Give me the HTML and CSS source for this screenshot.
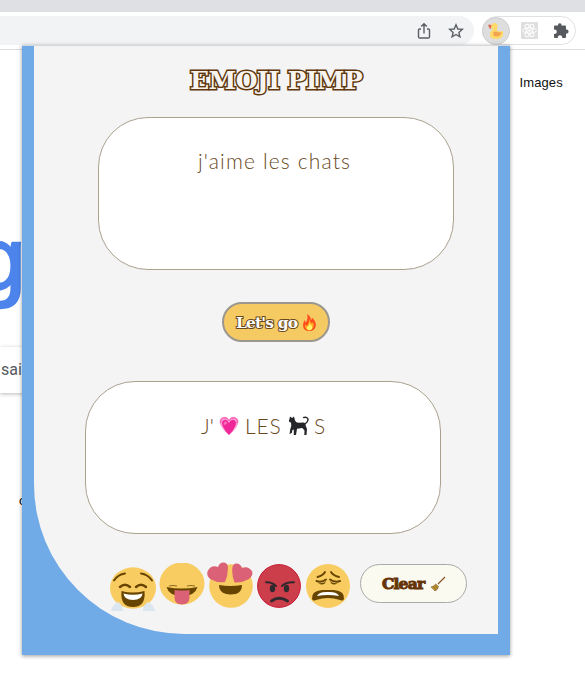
FILE: index.html
```
<!DOCTYPE html>
<html lang="fr">
<head>
<meta charset="utf-8">
<title>Emoji Pimp</title>
<link rel="stylesheet" href="styles.css">
</head>
<body>
<header class="browser">
  <div class="tabs"></div>
  <div class="toolbar">
    <div class="address">
      <svg class="share" width="14" height="18" viewBox="0 0 14 18" fill="none" stroke="#5c5f63" stroke-width="1.4"><path d="M4 7H2.6Q1.5 7 1.5 8V14.8Q1.5 16 2.7 16H11.3Q12.5 16 12.5 14.8V8Q12.5 7 11.4 7H10M7 11.5V2M4.2 4.6L7 1.8L9.8 4.6"/></svg>
      <svg class="star" width="16" height="16" viewBox="0 0 16 16" fill="none" stroke="#5c5f63" stroke-width="1.4"><path d="M8 1.8L9.8 6L14.3 6.4L10.9 9.4L11.9 13.8L8 11.5L4.1 13.8L5.1 9.4L1.7 6.4L6.2 6Z"/></svg>
    </div>
    <div class="extensions">
      <span class="duck"><svg width="18" height="18" viewBox="0 0 18 18"><path fill="#ffd96a" d="M4 4Q5 .5 8 1Q11 1.5 10.5 5Q9.5 7 10 8.5Q12 10 16 9Q17.5 16.5 10 17Q2 17.5 3 11Q3.3 9 6 7.5Q3.8 7 4 4"/><path fill="#f2a451" d="M6.5 10Q9 8.6 12 10.5Q14.5 10 14.5 11Q12.5 15 9 14.5Q5.5 14 6.5 10"/><path fill="#d9694c" d="M1.5 2.5L4.3 3L4 6.7L2 6.5L2.8 5L1.5 5Z"/></svg></span>
      <svg width="17" height="17" viewBox="0 0 17 17"><rect width="17" height="17" rx="1" fill="#dedede"/><g fill="none" stroke="#fff"><ellipse cx="8.5" cy="8.5" rx="7" ry="2.7"/><ellipse cx="8.5" cy="8.5" rx="7" ry="2.7" transform="rotate(60 8.5 8.5)"/><ellipse cx="8.5" cy="8.5" rx="7" ry="2.7" transform="rotate(120 8.5 8.5)"/></g><circle cx="8.5" cy="8.5" r="1.3" fill="#fff"/></svg>
      <svg class="puzzle" width="16" height="16" viewBox="0 0 16 16"><path fill="#56595e" d="M1 3.5Q1 2.6 2 2.6H5Q4.7.3 6.8.3Q8.9.3 8.6 2.6H12Q13 2.6 13 3.6V6.6Q15.6 6.3 15.6 8.6Q15.6 10.9 13 10.6V14Q13 15 12 15H9.3Q9.2 12.2 7 12.2Q4.8 12.2 4.7 15H2Q1 15 1 14V11Q3.8 11 3.8 8.8Q3.8 6.6 1 6.6Z"/></svg>
    </div>
  </div>
</header>
<main class="page">
  <span class="images">Images</span>
  <div class="logo">g</div>
  <div class="suggest">sai</div>
  <div class="fragment">o</div>
</main>
<section class="popup">
  <div class="panel">
    <h1>EMOJI PIMP</h1>
    <div class="box input"><span>j'aime les chats</span></div>
    <button class="go"><span>Let's go</span>
      <svg width="15" height="17" viewBox="0 0 15 17"><path fill="#ff4b20" d="M5 0Q9 2 8.8 6Q10 5.5 10 3.5Q14.5 8 13.8 12Q12.8 17 7.5 17Q1 17 1 11Q1 8 3 6Q3 8 4 8.5Q6.5 4 5 0"/><path fill="#ffae22" d="M6.8 5Q9 9 10 9.5L11 8Q13.5 14.5 7.7 16.5Q2.5 16 3 10.5L4.7 12Q7.5 9 6.8 5"/><path fill="#fff36b" d="M7.7 9.5Q11 12.5 9.8 15Q7.5 17.5 5.2 15Q4.5 13 5.5 12.5Q7 12 7.7 9.5"/></svg>
    </button>
    <div class="box output">
      <span class="j">J'</span>
      <svg class="heart" width="20" height="20" viewBox="0 0 20 20"><path fill="#ffa0d4" d="M10 4Q12-.2 16 1Q20.3 2.4 19.2 7.5Q17.5 13 10 19Q2.5 13 .8 7.5Q-.3 2.4 4 1Q8-.2 10 4"/><path fill="none" stroke="#f04baa" d="M10 4.5Q12 .9 15.5 2Q19 3 18.2 7.2M10 4.5Q8 .9 4.5 2Q1 3 1.8 7.2"/><path fill="#ef2798" d="M10 7Q12 2.7 15 4Q18.2 5.5 16.3 10Q14.5 14.5 10 19Q5.5 14.5 3.7 10Q1.8 5.5 5 4Q8 2.7 10 7"/><path fill="#fa70bd" d="M5.2 6Q7.2 4.8 8.3 7Q7 9 5 9Q4 7 5.2 6"/></svg>
      <span class="les">LES</span>
      <svg class="cat" width="21" height="20" viewBox="0 0 21 20"><path fill="#252629" d="M2 .5L4 2L6 .5L7 4.5Q8 6.7 10.5 6.8L16 6.5Q18 7 17.8 10L19 13L18.5 19H16.3L16.5 14.5L14.3 12L9 12.7L8 19H5.8L5.8 13.5L4.4 14L3.8 17L1.5 18L2.3 13L3.3 10L3 6.5Q0 6 1.3 3.5Z"/><path fill="none" stroke="#252629" stroke-width="1.4" d="M17 8Q21 5 19.7 2.5Q18.5.5 15 1.7"/></svg>
      <span class="s">S</span>
    </div>
    <div class="actions">
      <svg class="face laugh" width="46" height="46" viewBox="0 0 46 46"><ellipse cx="23" cy="21" rx="23" ry="20.7" fill="#f9cc62"/><path fill="#dce6f1" d="M1 44Q2 38 8 35Q13 38 13 44ZM33 44Q33 38 38 35Q44 38 45 44Z"/><g fill="none" stroke="#674500" stroke-width="2" stroke-linecap="round"><path d="M4 13.5Q8 7.5 15 6.5M31 6.5Q38 7.5 42 13.5"/><path stroke-width="2.5" d="M10 20Q15 15.5 20 20M26 20Q31 15.5 36 20"/></g><path fill="#674500" d="M11.5 24Q23 27 34.5 24Q36 40 23 40Q10 40 11.5 24"/><path fill="#fff" d="M13.5 26.5Q23 29 32.5 26.5Q32 33 23 33Q14 33 13.5 26.5"/></svg>
      <svg class="face tongue" width="46" height="44" viewBox="0 0 46 44"><ellipse cx="23" cy="20.5" rx="22.5" ry="21" fill="#f9cc62"/><path fill="#674500" d="M7.5 24Q23 27 38.5 24Q36 33 23 33Q10 33 7.5 24"/><path fill="none" stroke="#8a681e" stroke-width="1" d="M10 23Q14 22 18 23M28 23Q32 22 36 23"/><path fill="#db6177" d="M15.5 27Q23 28 30.5 27V35Q30 41.5 23 41.5Q16 41.5 15.5 35Z"/></svg>
      <svg class="face love" width="46" height="47" viewBox="0 0 46 47"><circle cx="24" cy="24" r="21.8" fill="#f9cc62"/><path fill="#db6177" d="M11 5Q13-.3 18 .7Q21.5 2.3 20.8 7Q21 14 18 20Q10.5 21 4 17.5Q-1 14 .7 9Q4 2.5 11 5"/><path fill="#db6177" d="M35 6Q33 .5 28 1.7Q25 3 25.2 8Q25 14 27.5 20.5Q35 21 41 17.5Q46.7 14 45 9Q41 3.5 35 6"/><path fill="#674500" d="M12 23Q23 25 35 23Q35 32.5 23.5 32.5Q12 32 12 23"/></svg>
      <svg class="face angry" width="44" height="44" viewBox="0 0 44 44"><circle cx="22" cy="22" r="21.4" fill="#cb3e4a" stroke="#c71b35"/><g fill="none" stroke="#30292d" stroke-width="2" stroke-linecap="round"><path d="M9 18.3Q15 18 19 22M25 22Q29 18 37 18.3"/><path stroke-width="2.8" d="M14.5 37Q22 31.5 30.5 37"/></g><ellipse cx="15.5" cy="24.5" rx="2.7" ry="3.8" fill="#30292d"/><ellipse cx="29.5" cy="24.5" rx="2.7" ry="3.8" fill="#30292d"/></svg>
      <svg class="face weary" width="44" height="44" viewBox="0 0 44 44"><circle cx="22" cy="22" r="22" fill="#f9cc62"/><g fill="none" stroke="#674500" stroke-width="2" stroke-linecap="round"><path d="M11.5 13Q17 11.5 19 8M25 8Q27 11.5 33 13M10.5 17Q15 19 20 15.5M24 15.5Q29 19 34 17"/></g><path fill="#674500" d="M12 19Q17 20 20 17Q18 23 12 19M24 17Q27 20 32 19Q26 23 24 17M6 35Q5 27 16 26H28Q39 27 38 35Q37 37.5 34 36Q22 32 10 36Q7 37.5 6 35"/><path fill="#fff" d="M11 32Q13 27.5 22 28Q31 27.5 33 32Q22 30 11 32"/></svg>
      <button class="clear"><span>Clear</span>
        <svg width="16" height="16" viewBox="0 0 16 16"><path d="M8 8L15 1" stroke="#87562b" stroke-width="1.2"/><path fill="#c89b38" stroke="#795721" stroke-width=".6" d="M5.8 8L8.5 10.5Q8 13.5 5 15L1 11Q4 10.5 5.8 8"/><path d="M3 10.5L6.7 14M4.8 9.5L7.8 12.2" stroke="#70501b" stroke-width=".8"/></svg>
      </button>
    </div>
  </div>
</section>
</body>
</html>
```
FILE: styles.css
```
* { box-sizing: border-box; }
body {
  margin: 0;
  width: 585px;
  height: 673px;
  position: relative;
  overflow: hidden;
  background: #fff;
  font-family: "Liberation Sans", sans-serif;
}
.tabs { height: 12px; background: #dee0e4; }
.toolbar {
  height: 38px;
  padding-top: 4px;
  display: flex;
  align-items: flex-start;
  border-bottom: 1px solid #dadce0;
}
.address {
  width: 474px;
  height: 29px;
  padding-right: 10px;
  display: flex;
  align-items: center;
  justify-content: flex-end;
  gap: 17px;
  border-radius: 0 15px 15px 0;
  background: #f1f3f4;
}
.extensions {
  width: 94px;
  height: 29px;
  margin-left: 8px;
  display: flex;
  align-items: center;
  gap: 11px;
  border: 1px solid #dfe1e4;
  border-radius: 15px;
}
.duck {
  width: 28px;
  height: 28px;
  margin-left: -1px;
  display: flex;
  align-items: center;
  justify-content: center;
  border: 1px solid #cfcfcf;
  border-radius: 50%;
  background: #dedede;
}
.puzzle { margin-left: 4px; }
.page { display: flex; flex-direction: column; align-items: flex-start; }
.images {
  margin: 25px 0 0 519.5px;
  font-size: 13px;
  line-height: 15px;
  letter-spacing: .1px;
  color: #111;
}
.logo {
  height: 110px;
  margin: 113px 0 0 -24px;
  font-size: 89px;
  line-height: 110px;
  color: #4d84ec;
  -webkit-text-stroke: 2.5px #4d84ec;
}
.suggest {
  width: 60px;
  height: 46px;
  margin-top: 34px;
  padding-left: 1px;
  font-family: Roboto, sans-serif;
  font-size: 16px;
  line-height: 46px;
  color: #56595e;
  box-shadow: 0 1px 4px rgba(0, 0, 0, .28);
}
.fragment { margin: 100px 0 0 19px; font-size: 13px; line-height: 15px; }
.popup {
  position: absolute;
  left: 22px;
  top: 45px;
  width: 488px;
  height: 610px;
  padding: 0 12px 22px;
  border-top: 1px solid #d5d8dc;
  background: #70abe8;
  box-shadow: 0 1px 4px rgba(0, 0, 0, .4);
}
.panel {
  width: 464px;
  height: 588px;
  padding-top: 21px;
  display: flex;
  flex-direction: column;
  border-bottom-left-radius: 150px;
  background: #f4f4f4;
}
h1, button { font-family: "DejaVu Serif", serif; font-weight: bold; }
h1 {
  width: 184px;
  height: 25px;
  margin: 0 0 0 156px;
  font-size: 25px;
  line-height: 27px;
  letter-spacing: -.55px;
  white-space: nowrap;
  color: #f7f4ef;
  -webkit-text-stroke: 3px #5f370b;
  paint-order: stroke fill;
}
.box {
  width: 356px;
  height: 153px;
  border: 1px solid #aaa18f;
  border-radius: 50px;
  background: #fff;
  color: #69491d;
  font-family: Lato, sans-serif;
  font-weight: 300;
  font-size: 21px;
  line-height: 26px;
}
.input { margin: 25px 0 0 64px; padding: 30px 0 0 99px; letter-spacing: 1.15px; }
.go {
  width: 108px;
  height: 40px;
  margin: 32px 0 0 188px;
  padding: 0 11px 0 12px;
  display: flex;
  align-items: center;
  justify-content: space-between;
  border: 2px solid #9b978f;
  border-radius: 20px;
  background: #f6ca62;
  color: #fff;
  font-size: 15.5px;
  letter-spacing: -.85px;
  white-space: nowrap;
  -webkit-text-stroke: 2px #69491d;
  paint-order: stroke fill;
}
.output { margin: 39px 0 0 51px; padding: 31px 0 0 115px; display: flex; }
.j { width: 18px; }
.heart { margin: 3px 0 0; }
.les { width: 38px; margin-left: 6px; letter-spacing: .9px; }
.cat { margin: 3px 0 0 5px; }
.s { margin-left: 5px; }
.actions { height: 52px; margin: 28px 0 0 76px; display: flex; align-items: flex-start; }
.face { flex: none; }
.laugh { margin-top: 5px; }
.tongue { margin: 1px 0 0 3px; }
.love { margin-left: 2px; }
.angry { margin: 2px 0 0 4px; }
.weary { margin: 2px 0 0 5px; }
.clear {
  width: 107px;
  height: 39px;
  margin: 2px 0 0 10px;
  padding: 0 20px 0 21px;
  display: flex;
  align-items: center;
  justify-content: space-between;
  border: 1px solid #aaa;
  border-radius: 20px;
  background: #fafaf0;
  color: #653406;
  font-size: 15.5px;
  letter-spacing: -.8px;
  -webkit-text-stroke: 1px #653406;
}
```
